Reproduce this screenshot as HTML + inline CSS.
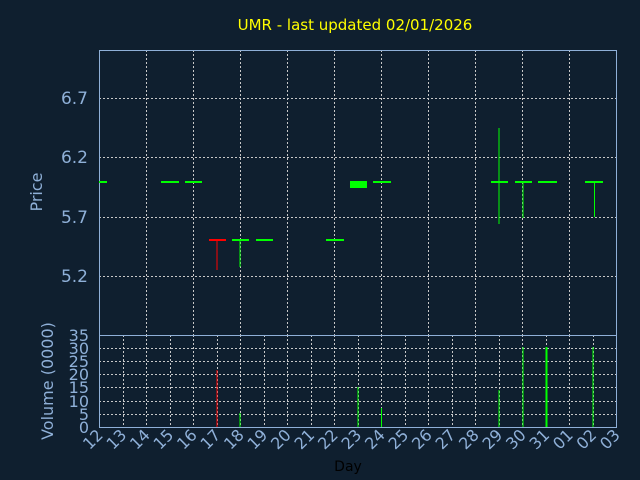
<!DOCTYPE html>
<html><head><style>body{margin:0;background:#0f1f2f;}svg{display:block}</style></head><body>
<svg width="640" height="480" xmlns="http://www.w3.org/2000/svg" font-family="'DejaVu Sans','Liberation Sans',sans-serif">
<rect width="640" height="480" fill="#0f1f2f"/>
<text x="355" y="30" fill="#ffff00" font-size="15" text-anchor="middle">UMR - last updated 02/01/2026</text>
<g stroke="#c8c8c8" stroke-dasharray="2,2" stroke-width="1">
<line x1="99" x2="617" y1="98.5" y2="98.5"/><line x1="99" x2="617" y1="157.5" y2="157.5"/><line x1="99" x2="617" y1="217.5" y2="217.5"/><line x1="99" x2="617" y1="276.5" y2="276.5"/>
<line x1="146.5" x2="146.5" y1="50" y2="335"/><line x1="193.5" x2="193.5" y1="50" y2="335"/><line x1="240.5" x2="240.5" y1="50" y2="335"/><line x1="287.5" x2="287.5" y1="50" y2="335"/><line x1="334.5" x2="334.5" y1="50" y2="335"/><line x1="381.5" x2="381.5" y1="50" y2="335"/><line x1="428.5" x2="428.5" y1="50" y2="335"/><line x1="475.5" x2="475.5" y1="50" y2="335"/><line x1="522.5" x2="522.5" y1="50" y2="335"/><line x1="569.5" x2="569.5" y1="50" y2="335"/>
<line x1="99" x2="617" y1="348.5" y2="348.5"/><line x1="99" x2="617" y1="361.5" y2="361.5"/><line x1="99" x2="617" y1="374.5" y2="374.5"/><line x1="99" x2="617" y1="387.5" y2="387.5"/><line x1="99" x2="617" y1="401.5" y2="401.5"/><line x1="99" x2="617" y1="414.5" y2="414.5"/>
<line x1="123.5" x2="123.5" y1="335" y2="427"/><line x1="146.5" x2="146.5" y1="335" y2="427"/><line x1="170.5" x2="170.5" y1="335" y2="427"/><line x1="193.5" x2="193.5" y1="335" y2="427"/><line x1="217.5" x2="217.5" y1="335" y2="427"/><line x1="240.5" x2="240.5" y1="335" y2="427"/><line x1="264.5" x2="264.5" y1="335" y2="427"/><line x1="287.5" x2="287.5" y1="335" y2="427"/><line x1="311.5" x2="311.5" y1="335" y2="427"/><line x1="334.5" x2="334.5" y1="335" y2="427"/><line x1="358.5" x2="358.5" y1="335" y2="427"/><line x1="381.5" x2="381.5" y1="335" y2="427"/><line x1="405.5" x2="405.5" y1="335" y2="427"/><line x1="428.5" x2="428.5" y1="335" y2="427"/><line x1="452.5" x2="452.5" y1="335" y2="427"/><line x1="475.5" x2="475.5" y1="335" y2="427"/><line x1="499.5" x2="499.5" y1="335" y2="427"/><line x1="522.5" x2="522.5" y1="335" y2="427"/><line x1="546.5" x2="546.5" y1="335" y2="427"/><line x1="569.5" x2="569.5" y1="335" y2="427"/><line x1="593.5" x2="593.5" y1="335" y2="427"/>
</g>
<g stroke="#8fb0d8" stroke-width="1" fill="none">
<rect x="99.5" y="50.5" width="517" height="285"/>
<rect x="99.5" y="335.5" width="517" height="92"/>
</g>
<g fill="#00ff00">
<rect x="99" y="181" width="8" height="2"/>
<rect x="161" y="181" width="18" height="2"/>
<rect x="185" y="181" width="17" height="2"/>
<rect x="209" y="239" width="17" height="2" fill="#ff0000"/><rect x="216.5" y="240" width="1" height="30" fill="#ff0000"/>
<rect x="232" y="239" width="17" height="2"/><rect x="239.5" y="240" width="1" height="27"/>
<rect x="256" y="239" width="17" height="2"/>
<rect x="326" y="239" width="18" height="2"/>
<rect x="350" y="181" width="17" height="7"/>
<rect x="373" y="181" width="18" height="2"/>
<rect x="491" y="181" width="17" height="2"/><rect x="498.5" y="128" width="1" height="96"/>
<rect x="515" y="181" width="17" height="2"/><rect x="522.5" y="182" width="1" height="36"/>
<rect x="538" y="181" width="19" height="2"/>
<rect x="585" y="181" width="18" height="2"/><rect x="594" y="182" width="1" height="35"/>
<rect x="216.5" y="370" width="1" height="57" fill="#ff0000"/>
<rect x="239.5" y="413" width="1" height="14"/>
<rect x="357.5" y="387" width="1" height="40"/>
<rect x="381" y="408" width="1" height="19"/>
<rect x="498.5" y="390" width="1" height="37"/>
<rect x="522.5" y="347" width="1" height="80"/>
<rect x="545.5" y="347" width="2" height="80"/>
<rect x="592.5" y="347" width="1" height="80"/>
</g>
<g fill="#8fb0d8" font-size="17" text-anchor="end">
<text x="88" y="104">6.7</text><text x="88" y="163">6.2</text><text x="88" y="223">5.7</text><text x="88" y="282">5.2</text>
</g>
<g fill="#8fb0d8" font-size="16" text-anchor="end">
<text x="89" y="341">35</text><text x="89" y="354">30</text><text x="89" y="367">25</text><text x="89" y="380">20</text><text x="89" y="393">15</text><text x="89" y="407">10</text><text x="89" y="420">5</text><text x="89" y="433">0</text>
</g>
<text transform="translate(42,192) rotate(-90)" fill="#8fb0d8" font-size="16" text-anchor="middle">Price</text>
<text transform="translate(53,381) rotate(-90)" fill="#8fb0d8" font-size="16" text-anchor="middle">Volume (0000)</text>
<text x="348" y="471" font-size="14" text-anchor="middle" fill="#000">Day</text>
<g fill="#8fb0d8" font-size="16" text-anchor="end">
<text transform="translate(104,436) rotate(-45)">12</text><text transform="translate(127.5,436) rotate(-45)">13</text><text transform="translate(151,436) rotate(-45)">14</text><text transform="translate(174.5,436) rotate(-45)">15</text><text transform="translate(198,436) rotate(-45)">16</text><text transform="translate(221.5,436) rotate(-45)">17</text><text transform="translate(245,436) rotate(-45)">18</text><text transform="translate(268.5,436) rotate(-45)">19</text><text transform="translate(292,436) rotate(-45)">20</text><text transform="translate(315.5,436) rotate(-45)">21</text><text transform="translate(339,436) rotate(-45)">22</text><text transform="translate(362.5,436) rotate(-45)">23</text><text transform="translate(386,436) rotate(-45)">24</text><text transform="translate(409.5,436) rotate(-45)">25</text><text transform="translate(433,436) rotate(-45)">26</text><text transform="translate(456.5,436) rotate(-45)">27</text><text transform="translate(480,436) rotate(-45)">28</text><text transform="translate(503.5,436) rotate(-45)">29</text><text transform="translate(527,436) rotate(-45)">30</text><text transform="translate(550.5,436) rotate(-45)">31</text><text transform="translate(574,436) rotate(-45)">01</text><text transform="translate(597.5,436) rotate(-45)">02</text><text transform="translate(621,436) rotate(-45)">03</text>
</g>
</svg>
</body></html>
